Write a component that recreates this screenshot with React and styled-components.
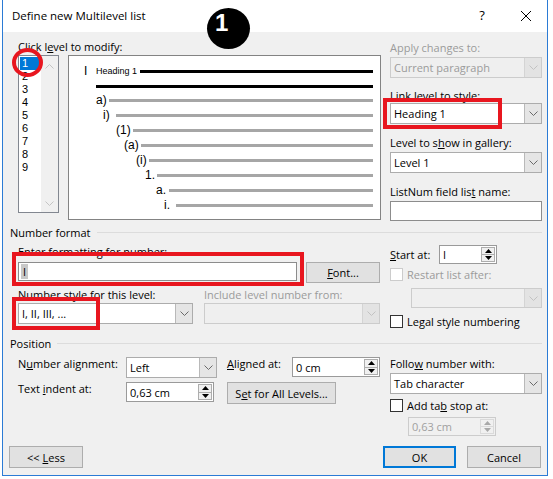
import React from "react";
import styled, { createGlobalStyle } from "styled-components";

const GlobalStyle = createGlobalStyle`
  html, body {
    margin: 0;
    padding: 0;
    background: #fff;
  }
  body {
    font-family: "Open Sans", "Noto Sans", sans-serif;
    font-size: 11px;
    color: #000;
  }
  * {
    box-sizing: border-box;
  }
`;

const UI_FONT = `"Open Sans", "Noto Sans", sans-serif`;

const levels = ["1", "2", "3", "4", "5", "6", "7", "8", "9"];

const previewRows = [
  { text: "a)", x: 96, line: 109 },
  { text: "i)", x: 103, line: 116 },
  { text: "(1)", x: 116, line: 133 },
  { text: "(a)", x: 124, line: 141 },
  { text: "(i)", x: 136, line: 149 },
  { text: "1.", x: 145, line: 157 },
  { text: "a.", x: 156, line: 169 },
  { text: "i.", x: 164, line: 176 },
];

// preview inner box starts at x = 69
const PREVIEW_LEFT = 69;

const Chevron = ({ down = true, color = "#606060" }) => (
  <svg width="9" height="5" viewBox="0 0 9 5">
    <polyline
      points={down ? "0.5,0.5 4.5,4.5 8.5,0.5" : "0.5,4.5 4.5,0.5 8.5,4.5"}
      fill="none"
      stroke={color}
      strokeWidth="1"
    />
  </svg>
);

const Triangle = ({ up, color }) => (
  <svg width="7" height="4" viewBox="0 0 7 4">
    <polygon points={up ? "0,4 3.5,0 7,4" : "0,0 3.5,4 7,0"} fill={color} />
  </svg>
);

const Select = ({ value, width, height, disabled }) => (
  <SelectBox $w={width} $h={height} $disabled={disabled}>
    <SelectValue $disabled={disabled}>{value}</SelectValue>
    <SelectArrow $disabled={disabled}>
      <Chevron color={disabled ? "#c2c2c2" : "#6a6a6a"} />
    </SelectArrow>
  </SelectBox>
);

const Spin = ({ value, width, height, disabled }) => (
  <SpinBox $w={width} $h={height} $disabled={disabled}>
    <SpinValue $disabled={disabled}>{value}</SpinValue>
    <SpinButtons $disabled={disabled}>
      <SpinButton $disabled={disabled}>
        <Triangle up color={disabled ? "#a8a8a8" : "#000"} />
      </SpinButton>
      <SpinButton $disabled={disabled}>
        <Triangle color={disabled ? "#a8a8a8" : "#000"} />
      </SpinButton>
    </SpinButtons>
  </SpinBox>
);

const App = () => {
  return (
    <Page>
      <GlobalStyle />
      <Window>
        <TitleBar>
          <Title>Define new Multilevel list</Title>
          <HelpButton>?</HelpButton>
          <CloseButton>
            <svg width="12" height="12" viewBox="0 0 12 12">
              <path d="M1 1 L11 11 M11 1 L1 11" stroke="#000" strokeWidth="1" />
            </svg>
          </CloseButton>
        </TitleBar>

        <Body>
          <TopSection>
            <LeftCol>
              <Label>
                Click l<u>e</u>vel to modify:
              </Label>
              <ListRow>
                <LevelList>
                  <LevelItems>
                    {levels.map((lvl) => (
                      <LevelItem key={lvl} $selected={lvl === "1"}>
                        {lvl}
                      </LevelItem>
                    ))}
                  </LevelItems>
                  <ScrollTrack>
                    <Chevron down={false} color="#c4c4c4" />
                    <Chevron color="#c4c4c4" />
                  </ScrollTrack>
                </LevelList>
                <Preview>
                  <PreviewRow $indent={84 - PREVIEW_LEFT}>
                    <PreviewNum $w={12}>I</PreviewNum>
                    <HeadingText>Heading 1</HeadingText>
                    <PreviewLine $heavy />
                  </PreviewRow>
                  <PreviewRow $indent={96 - PREVIEW_LEFT} $h={14}>
                    <PreviewLine $heavy />
                  </PreviewRow>
                  {previewRows.map((row) => (
                    <PreviewRow key={row.text + row.x} $indent={row.x - PREVIEW_LEFT}>
                      <PreviewNum $w={row.line - row.x}>{row.text}</PreviewNum>
                      <PreviewLine />
                    </PreviewRow>
                  ))}
                </Preview>
              </ListRow>
            </LeftCol>

            <RightCol>
              <Label $disabled>Apply changes to:</Label>
              <Spacer $h={2} />
              <Select value="Current paragraph" width={152} disabled />
              <Label $mt={10}>
                <u>L</u>ink level to style:
              </Label>
              <Select value="Heading 1" width={152} />
              <Label $mt={11}>
                Level to s<u>h</u>ow in gallery:
              </Label>
              <Spacer $h={2} />
              <Select value="Level 1" width={152} />
              <Label $mt={11}>
                ListNum field lis<u>t</u> name:
              </Label>
              <Spacer $h={2} />
              <TextInput $w={152} $h={20} />
            </RightCol>
          </TopSection>

          <GroupHeader $mt={4}>
            <GroupTitle>Number format</GroupTitle>
            <GroupLine />
          </GroupHeader>
          <GroupBody>
            <LeftPane>
              <Label $mt={4}>Enter formatting for number:</Label>
              <FieldRow $mt={3}>
                <TextInput $w={279} $h={19}>
                  <Selected>I</Selected>
                </TextInput>
                <Button $w={74} $h={21} $ml={9}>
                  <u>F</u>ont...
                </Button>
              </FieldRow>
              <FieldRow $mt={4}>
                <FieldCol $w={175}>
                  <Label>
                    <u>N</u>umber style for this level:
                  </Label>
                  <Spacer $h={1} />
                  <Select value="I, II, III, ..." width={175} />
                </FieldCol>
                <FieldCol $w={176} $ml={11}>
                  <Label $disabled>Include level number from:</Label>
                  <Spacer $h={1} />
                  <Select value="" width={176} disabled />
                </FieldCol>
              </FieldRow>
            </LeftPane>

            <RightPane>
              <InlineRow $mt={5} $h={19}>
                <InlineLabel $w={49}>
                  <u>S</u>tart at:
                </InlineLabel>
                <Spin value="I" width={58} height={19} />
              </InlineRow>
              <CheckRow $mt={4}>
                <CheckBox $disabled />
                <CheckLabel $disabled>Restart list after:</CheckLabel>
              </CheckRow>
              <Indented $ml={21} $mt={7}>
                <Select value="" width={131} height={20} disabled />
              </Indented>
              <CheckRow $mt={7}>
                <CheckBox />
                <CheckLabel>
                  Le<u>g</u>al style numbering
                </CheckLabel>
              </CheckRow>
            </RightPane>
          </GroupBody>

          <GroupHeader $mt={8}>
            <GroupTitle>Position</GroupTitle>
            <GroupLine />
          </GroupHeader>
          <GroupBody>
            <LeftPane>
              <FieldRow $mt={6}>
                <InlineLabel $w={108} $top>
                  N<u>u</u>mber alignment:
                </InlineLabel>
                <Select value="Left" width={91} height={21} />
                <InlineLabel $w={65} $ml={10} $top>
                  <u>A</u>ligned at:
                </InlineLabel>
                <Spin value="0 cm" width={88} height={20} />
              </FieldRow>
              <FieldRow $mt={4}>
                <InlineLabel $w={108} $top>
                  Text <u>i</u>ndent at:
                </InlineLabel>
                <Spin value="0,63 cm" width={88} height={20} />
                <Button $w={109} $h={22} $ml={13}>
                  S<u>e</u>t for All Levels...
                </Button>
              </FieldRow>
            </LeftPane>

            <RightPane>
              <Label $mt={5}>
                Follo<u>w</u> number with:
              </Label>
              <Spacer $h={2} />
              <Select value="Tab character" width={152} />
              <CheckRow $mt={5}>
                <CheckBox />
                <CheckLabel>
                  Add ta<u>b</u> stop at:
                </CheckLabel>
              </CheckRow>
              <Indented $ml={18} $mt={5}>
                <Spin value="0,63 cm" width={88} height={19} disabled />
              </Indented>
            </RightPane>
          </GroupBody>

          <Footer>
            <Button $w={74} $h={22}>
              &lt;&lt; <u>L</u>ess
            </Button>
            <FooterRight>
              <Button $w={73} $h={22} $primary>
                OK
              </Button>
              <Button $w={74} $h={22} $ml={11}>
                Cancel
              </Button>
            </FooterRight>
          </Footer>
        </Body>
      </Window>

      <BadgeCircle>
        <BadgeNum>1</BadgeNum>
      </BadgeCircle>
      <RedRing />
      <RedBox $x={383} $y={98} $w={119} $h={31} />
      <RedBox $x={12} $y={252} $w={292} $h={34} />
      <RedBox $x={12} $y={297} $w={88} $h={33} />
    </Page>
  );
};

export default App;

const Page = styled.div`
  position: relative;
  width: 553px;
  height: 479px;
  padding-left: 2px;
  overflow: hidden;
`;

const Window = styled.div`
  width: 546px;
  height: 476px;
  display: flex;
  flex-direction: column;
  background: #f0f0f0;
  border: 1px solid #2b7bd5;
  border-top: none;
`;

const TitleBar = styled.div`
  height: 32px;
  display: flex;
  align-items: center;
  background: #fff;
  padding-left: 9px;
  flex-shrink: 0;
`;

const Title = styled.div`
  flex: 1;
  font-size: 11.5px;
  margin-top: -1px;
`;

const HelpButton = styled.div`
  width: 14px;
  text-align: center;
  font-size: 13px;
  margin-right: 30px;
  margin-top: -2px;
`;

const CloseButton = styled.div`
  width: 14px;
  display: flex;
  justify-content: center;
  margin-right: 14px;
`;

const Body = styled.div`
  flex: 1;
  display: flex;
  flex-direction: column;
  padding: 0 5px 7px 6px;
`;

const TopSection = styled.div`
  display: flex;
  padding-top: 7px;
  padding-left: 9px;
`;

const LeftCol = styled.div`
  display: flex;
  flex-direction: column;
  width: 363px;
`;

const RightCol = styled.div`
  display: flex;
  flex-direction: column;
  width: 152px;
  margin-left: 9px;
  padding-top: 1px;
`;

const Label = styled.div`
  font-size: 11px;
  line-height: 15px;
  height: 15px;
  white-space: nowrap;
  margin-top: ${(p) => p.$mt || 0}px;
  color: ${(p) => (p.$disabled ? "#9b9b9b" : "#000")};

  u {
    text-underline-offset: 1px;
  }
`;

const Spacer = styled.div`
  height: ${(p) => p.$h}px;
  flex-shrink: 0;
`;

const ListRow = styled.div`
  display: flex;
  gap: 9px;
  margin-top: 1px;
  align-items: flex-start;
`;

const LevelList = styled.div`
  width: 41px;
  height: 158px;
  display: flex;
  border: 1px solid #828790;
  background: #fff;
`;

const LevelItems = styled.div`
  width: 22px;
  padding: 1px 0 0 1px;
`;

const LevelItem = styled.div`
  width: 19px;
  height: 13px;
  line-height: 13px;
  padding-left: 2px;
  font-family: "Liberation Sans", Arial, sans-serif;
  font-size: 11px;
  background: ${(p) => (p.$selected ? "#0078d7" : "transparent")};
  color: ${(p) => (p.$selected ? "#fff" : "#000")};
`;

const ScrollTrack = styled.div`
  width: 17px;
  background: #f0f0f0;
  display: flex;
  flex-direction: column;
  justify-content: space-between;
  align-items: center;
  padding: 8px 0 6px;
`;

const Preview = styled.div`
  width: 313px;
  height: 165px;
  background: #fff;
  border: 1px solid #838383;
  padding: 8px 7px 0 0;
  font-family: "Liberation Sans", Arial, sans-serif;
`;

const PreviewRow = styled.div`
  display: flex;
  align-items: center;
  height: ${(p) => p.$h || 15}px;
  padding-left: ${(p) => p.$indent}px;
`;

const PreviewNum = styled.div`
  width: ${(p) => p.$w}px;
  flex-shrink: 0;
  font-size: 12px;
  line-height: 15px;
  white-space: nowrap;
`;

const HeadingText = styled.div`
  font-size: 9px;
  line-height: 15px;
  margin-right: 3px;
  white-space: nowrap;
`;

const PreviewLine = styled.div`
  flex: 1;
  height: 3px;
  background: ${(p) => (p.$heavy ? "#000" : "#a6a6a6")};
`;

const SelectBox = styled.div`
  display: flex;
  flex-shrink: 0;
  width: ${(p) => p.$w}px;
  height: ${(p) => p.$h || 21}px;
  border: 1px solid ${(p) => (p.$disabled ? "#cccccc" : "#acacac")};
  background: ${(p) => (p.$disabled ? "#efefef" : "#fff")};
`;

const SelectValue = styled.div`
  flex: 1;
  display: flex;
  align-items: center;
  padding-left: 3px;
  font-size: 11px;
  white-space: nowrap;
  color: ${(p) => (p.$disabled ? "#9b9b9b" : "#000")};
`;

const SelectArrow = styled.div`
  width: 17px;
  display: flex;
  align-items: center;
  justify-content: center;
  background: ${(p) => (p.$disabled ? "#e3e3e3" : "#e5e5e5")};
  border-left: 1px solid ${(p) => (p.$disabled ? "#d4d4d4" : "#b9b9b9")};
`;

const SpinBox = styled.div`
  display: flex;
  flex-shrink: 0;
  width: ${(p) => p.$w}px;
  height: ${(p) => p.$h}px;
  border: 1px solid ${(p) => (p.$disabled ? "#cccccc" : "#9a9a9a")};
  background: ${(p) => (p.$disabled ? "#f0f0f0" : "#fff")};
`;

const SpinValue = styled.div`
  flex: 1;
  display: flex;
  align-items: center;
  padding-left: 3px;
  font-size: 11px;
  white-space: nowrap;
  color: ${(p) => (p.$disabled ? "#a0a0a0" : "#000")};
`;

const SpinButtons = styled.div`
  width: 16px;
  display: flex;
  flex-direction: column;
  padding: 1px;
`;

const SpinButton = styled.div`
  flex: 1;
  display: flex;
  align-items: center;
  justify-content: center;
  background: #f0f0f0;
  border: 1px solid ${(p) => (p.$disabled ? "#dadada" : "#adadad")};

  & + & {
    border-top: none;
  }
`;

const TextInput = styled.div`
  flex-shrink: 0;
  width: ${(p) => p.$w}px;
  height: ${(p) => p.$h}px;
  background: #fff;
  border: 1px solid #8c8c8c;
  display: flex;
  align-items: center;
  padding-left: 2px;
  font-size: 11px;
`;

const Selected = styled.span`
  background: #c8c8c8;
  padding: 0 2px;
  line-height: 15px;
`;

const Button = styled.button`
  flex-shrink: 0;
  width: ${(p) => p.$w}px;
  height: ${(p) => p.$h}px;
  margin-left: ${(p) => p.$ml || 0}px;
  padding: 0;
  font-family: ${UI_FONT};
  font-size: 11px;
  color: #000;
  background: #e1e1e1;
  border: ${(p) => (p.$primary ? "2px solid #0078d7" : "1px solid #adadad")};
  white-space: nowrap;
`;

const GroupHeader = styled.div`
  display: flex;
  align-items: center;
  height: 15px;
  margin-top: ${(p) => p.$mt || 0}px;
  margin-left: 1px;
`;

const GroupTitle = styled.div`
  font-size: 11px;
  line-height: 15px;
`;

const GroupLine = styled.div`
  flex: 1;
  height: 1px;
  background: #dcdcdc;
  margin-left: 6px;
`;

const GroupBody = styled.div`
  display: flex;
  padding-left: 9px;
`;

const LeftPane = styled.div`
  width: 362px;
  display: flex;
  flex-direction: column;
`;

const RightPane = styled.div`
  width: 152px;
  margin-left: 10px;
  display: flex;
  flex-direction: column;
`;

const FieldRow = styled.div`
  display: flex;
  align-items: flex-start;
  margin-top: ${(p) => p.$mt || 0}px;
`;

const FieldCol = styled.div`
  display: flex;
  flex-direction: column;
  width: ${(p) => p.$w}px;
  margin-left: ${(p) => p.$ml || 0}px;
`;

const InlineRow = styled.div`
  display: flex;
  align-items: center;
  height: ${(p) => p.$h}px;
  margin-top: ${(p) => p.$mt || 0}px;
`;

const InlineLabel = styled.div`
  flex-shrink: 0;
  width: ${(p) => p.$w}px;
  margin-left: ${(p) => p.$ml || 0}px;
  margin-top: ${(p) => (p.$top ? -1 : 0)}px;
  font-size: 11px;
  line-height: 15px;
  white-space: nowrap;

  u {
    text-underline-offset: 1px;
  }
`;

const CheckRow = styled.div`
  display: flex;
  align-items: center;
  height: 13px;
  margin-top: ${(p) => p.$mt || 0}px;
`;

const CheckBox = styled.div`
  width: 13px;
  height: 13px;
  flex-shrink: 0;
  background: #fff;
  border: 1px solid ${(p) => (p.$disabled ? "#cccccc" : "#333")};
`;

const CheckLabel = styled.div`
  margin-left: 4px;
  font-size: 11px;
  line-height: 15px;
  white-space: nowrap;
  color: ${(p) => (p.$disabled ? "#9b9b9b" : "#000")};

  u {
    text-underline-offset: 1px;
  }
`;

const Indented = styled.div`
  margin-left: ${(p) => p.$ml}px;
  margin-top: ${(p) => p.$mt}px;
`;

const Footer = styled.div`
  margin-top: auto;
  display: flex;
  justify-content: space-between;
  align-items: flex-end;
`;

const FooterRight = styled.div`
  display: flex;
  margin-right: 1px;
`;

/* annotations drawn over the dialog */

const BadgeCircle = styled.div`
  position: absolute;
  left: 207px;
  top: 8px;
  width: 43px;
  height: 41px;
  border-radius: 50%;
  background: #000;
  padding: 3px 0 0 8px;
`;

const BadgeNum = styled.div`
  font-family: "Liberation Sans", Arial, sans-serif;
  font-weight: 700;
  font-size: 24px;
  line-height: 24px;
  color: #fff;
`;

const RedRing = styled.div`
  position: absolute;
  left: 12px;
  top: 48px;
  width: 31px;
  height: 29px;
  border: 4px solid #e8161f;
  border-radius: 50%;
`;

const RedBox = styled.div`
  position: absolute;
  left: ${(p) => p.$x}px;
  top: ${(p) => p.$y}px;
  width: ${(p) => p.$w}px;
  height: ${(p) => p.$h}px;
  border: 4px solid #e8161f;
`;
